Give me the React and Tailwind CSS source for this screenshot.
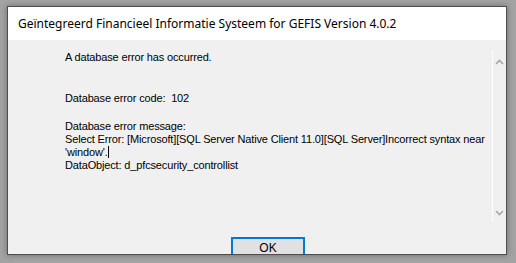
export default function App() {
  const body = { fontFamily: '"Liberation Sans", Arial, sans-serif' };
  return (
    <div className="w-[516px] h-[263px] bg-[#a3a3a3] pt-[6px] pl-[7px] overflow-hidden">
      <div className="w-[500px] h-[249px] border border-[#4d4d4d] bg-[#f0f0f0] flex flex-col shadow-[0_0_6px_rgba(0,0,0,0.35)]">
        <div
          className="h-[33px] shrink-0 bg-white flex items-center pl-[10px] text-[12px] text-black"
          style={{ fontFamily: '"Noto Sans", "Segoe UI", sans-serif' }}
        >
          Geïntegreerd Financieel Informatie Systeem for GEFIS Version 4.0.2
        </div>
        <div className="flex-1 flex flex-col overflow-hidden" style={body}>
          <div className="flex shrink-0 pt-[11px] h-[181px]">
            <div className="flex-1 pl-[57px] text-[11px] leading-[13px] tracking-[-0.15px] text-black whitespace-nowrap">
              <div>A database error has occurred.</div>
              <div className="mt-[28px]">Database error code:&nbsp; 102</div>
              <div className="mt-[15px]">Database error message:</div>
              <div>Select Error: [Microsoft][SQL Server Native Client 11.0][SQL Server]Incorrect syntax near</div>
              <div>'window'.<span className="inline-block w-px h-[12px] bg-black align-[-2px]"></span></div>
              <div>DataObject: d_pfcsecurity_controllist</div>
            </div>
            <div className="w-[14px] shrink-0 border-l border-white flex flex-col items-center justify-between pt-[8px] pb-[5px]">
              <svg width="9" height="6" viewBox="0 0 9 6">
                <path d="M1 5 L4.5 1.5 L8 5" fill="none" stroke="#a6a6a6" strokeWidth="1.6" />
              </svg>
              <svg width="9" height="6" viewBox="0 0 9 6">
                <path d="M1 1 L4.5 4.5 L8 1" fill="none" stroke="#a6a6a6" strokeWidth="1.6" />
              </svg>
            </div>
          </div>
          <div className="shrink-0 pl-[223px] pt-[16px]">
            <div
              className="w-[74px] h-[22px] border-2 border-[#0078d7] bg-[#e1e1e1] flex items-center justify-center text-[12px] text-black"
              style={{ fontFamily: '"Liberation Sans", Arial, sans-serif' }}
            >
              OK
            </div>
          </div>
        </div>
      </div>
    </div>
  );
}
